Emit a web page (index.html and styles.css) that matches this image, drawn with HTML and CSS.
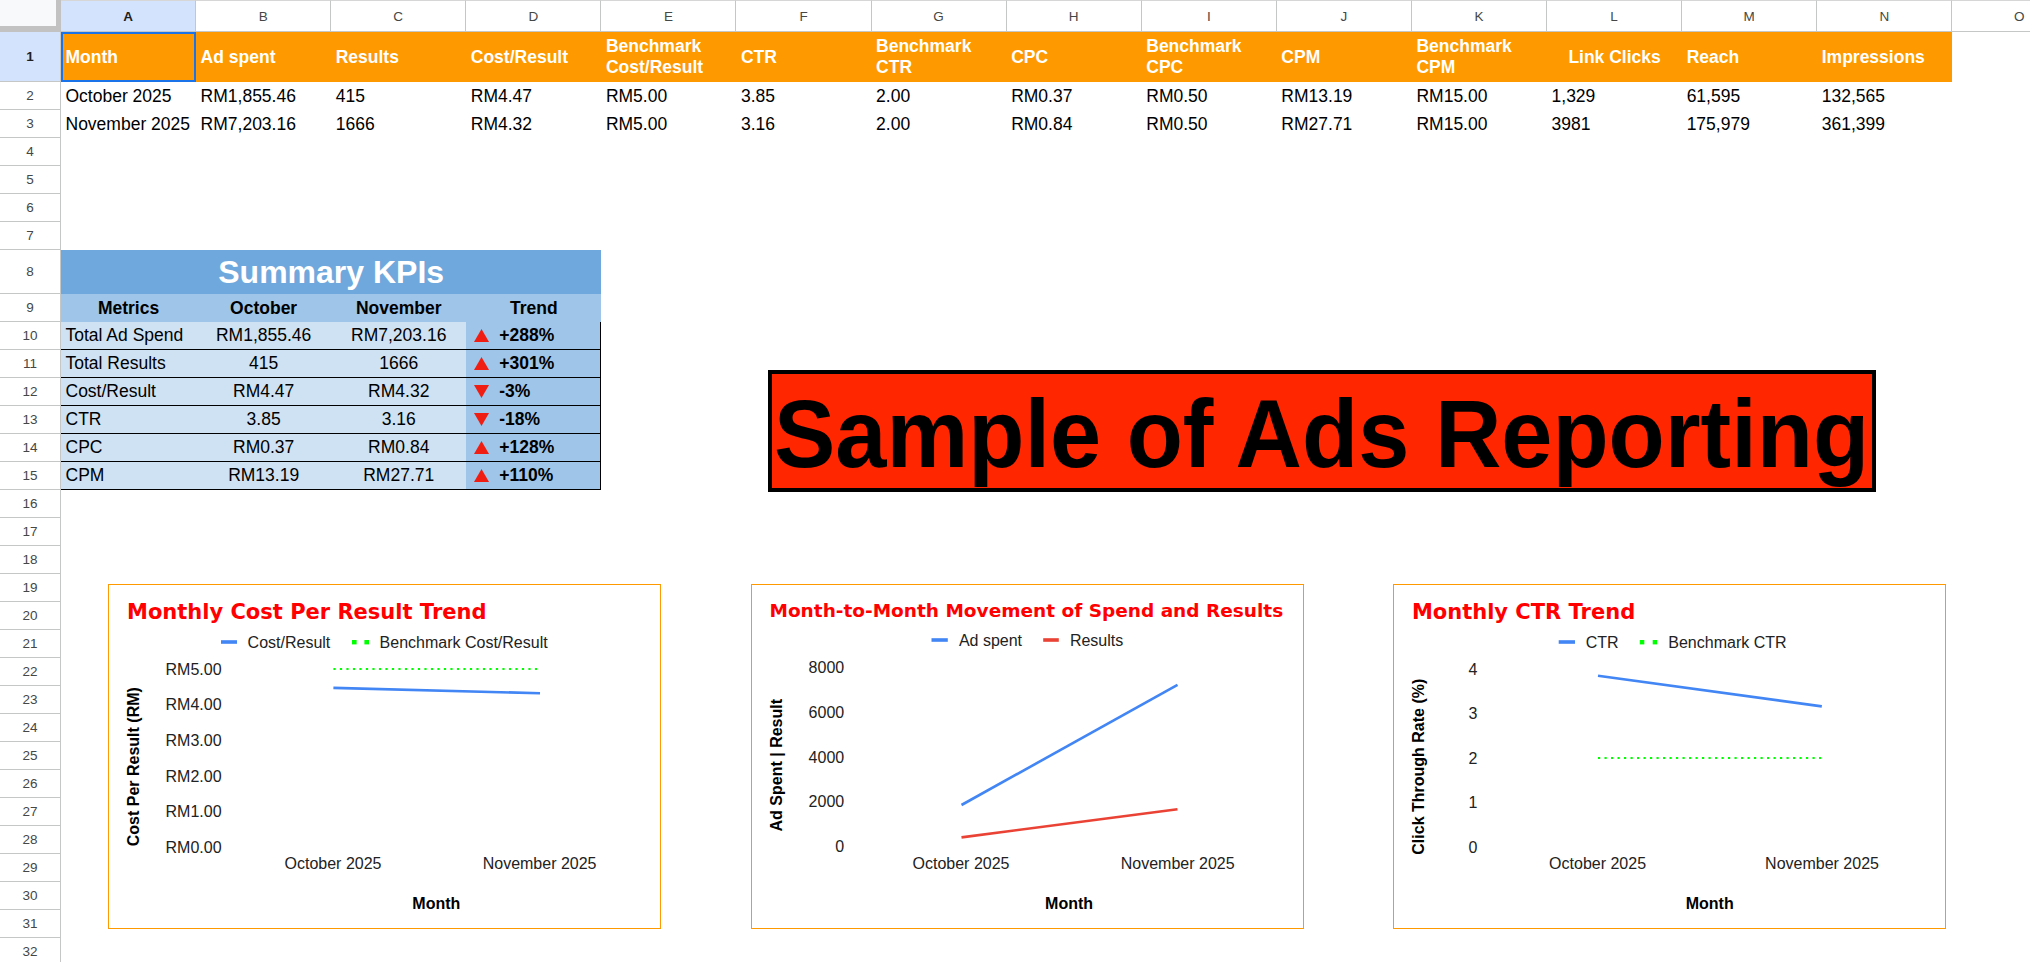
FILE: index.html
```html
<!DOCTYPE html>
<html>
<head>
<meta charset="utf-8">
<title>Sample of Ads Reporting</title>
<link rel="stylesheet" href="styles.css">
</head>
<body>
<div class="sheet">
  <div class="colhead">
    <div class="corner"></div>
    <div class="col sel">A</div>
    <div class="col">B</div>
    <div class="col">C</div>
    <div class="col">D</div>
    <div class="col">E</div>
    <div class="col">F</div>
    <div class="col">G</div>
    <div class="col">H</div>
    <div class="col">I</div>
    <div class="col">J</div>
    <div class="col">K</div>
    <div class="col">L</div>
    <div class="col">M</div>
    <div class="col">N</div>
    <div class="col">O</div>
  </div>
  <div class="main">
    <div class="rowhead">
      <div class="rn tall sel">1</div>
      <div class="rn">2</div>
      <div class="rn">3</div>
      <div class="rn">4</div>
      <div class="rn">5</div>
      <div class="rn">6</div>
      <div class="rn">7</div>
      <div class="rn mid">8</div>
      <div class="rn">9</div>
      <div class="rn">10</div>
      <div class="rn">11</div>
      <div class="rn">12</div>
      <div class="rn">13</div>
      <div class="rn">14</div>
      <div class="rn">15</div>
      <div class="rn">16</div>
      <div class="rn">17</div>
      <div class="rn">18</div>
      <div class="rn">19</div>
      <div class="rn">20</div>
      <div class="rn">21</div>
      <div class="rn">22</div>
      <div class="rn">23</div>
      <div class="rn">24</div>
      <div class="rn">25</div>
      <div class="rn">26</div>
      <div class="rn">27</div>
      <div class="rn">28</div>
      <div class="rn">29</div>
      <div class="rn">30</div>
      <div class="rn">31</div>
      <div class="rn">32</div>
    </div>
    <div class="cells">
      <div class="row hdr">
        <div class="c active">Month</div>
        <div class="c">Ad spent</div>
        <div class="c">Results</div>
        <div class="c">Cost/Result</div>
        <div class="c">Benchmark Cost/Result</div>
        <div class="c">CTR</div>
        <div class="c">Benchmark CTR</div>
        <div class="c">CPC</div>
        <div class="c">Benchmark CPC</div>
        <div class="c">CPM</div>
        <div class="c">Benchmark CPM</div>
        <div class="c center">Link Clicks</div>
        <div class="c">Reach</div>
        <div class="c">Impressions</div>
      </div>
      <div class="row">
        <div class="c">October 2025</div>
        <div class="c">RM1,855.46</div>
        <div class="c">415</div>
        <div class="c">RM4.47</div>
        <div class="c">RM5.00</div>
        <div class="c">3.85</div>
        <div class="c">2.00</div>
        <div class="c">RM0.37</div>
        <div class="c">RM0.50</div>
        <div class="c">RM13.19</div>
        <div class="c">RM15.00</div>
        <div class="c">1,329</div>
        <div class="c">61,595</div>
        <div class="c">132,565</div>
      </div>
      <div class="row">
        <div class="c">November 2025</div>
        <div class="c">RM7,203.16</div>
        <div class="c">1666</div>
        <div class="c">RM4.32</div>
        <div class="c">RM5.00</div>
        <div class="c">3.16</div>
        <div class="c">2.00</div>
        <div class="c">RM0.84</div>
        <div class="c">RM0.50</div>
        <div class="c">RM27.71</div>
        <div class="c">RM15.00</div>
        <div class="c">3981</div>
        <div class="c">175,979</div>
        <div class="c">361,399</div>
      </div>
      <div class="blank-rows"></div>

      <div class="kpi-section">
        <div class="kpi">
          <div class="kpi-title">Summary KPIs</div>
          <div class="kpi-head">
            <div class="k">Metrics</div>
            <div class="k">October</div>
            <div class="k">November</div>
            <div class="k">Trend</div>
          </div>
          <div class="kpi-row">
            <div class="k name">Total Ad Spend</div>
            <div class="k">RM1,855.46</div>
            <div class="k">RM7,203.16</div>
            <div class="k trend"><svg class="tri" viewBox="0 0 15 13"><polygon points="7.5,0 15,13 0,13"/></svg><span>+288%</span></div>
          </div>
          <div class="kpi-row">
            <div class="k name">Total Results</div>
            <div class="k">415</div>
            <div class="k">1666</div>
            <div class="k trend"><svg class="tri" viewBox="0 0 15 13"><polygon points="7.5,0 15,13 0,13"/></svg><span>+301%</span></div>
          </div>
          <div class="kpi-row">
            <div class="k name">Cost/Result</div>
            <div class="k">RM4.47</div>
            <div class="k">RM4.32</div>
            <div class="k trend"><svg class="tri" viewBox="0 0 15 13"><polygon points="0,0 15,0 7.5,13"/></svg><span>-3%</span></div>
          </div>
          <div class="kpi-row">
            <div class="k name">CTR</div>
            <div class="k">3.85</div>
            <div class="k">3.16</div>
            <div class="k trend"><svg class="tri" viewBox="0 0 15 13"><polygon points="0,0 15,0 7.5,13"/></svg><span>-18%</span></div>
          </div>
          <div class="kpi-row">
            <div class="k name">CPC</div>
            <div class="k">RM0.37</div>
            <div class="k">RM0.84</div>
            <div class="k trend"><svg class="tri" viewBox="0 0 15 13"><polygon points="7.5,0 15,13 0,13"/></svg><span>+128%</span></div>
          </div>
          <div class="kpi-row">
            <div class="k name">CPM</div>
            <div class="k">RM13.19</div>
            <div class="k">RM27.71</div>
            <div class="k trend"><svg class="tri" viewBox="0 0 15 13"><polygon points="7.5,0 15,13 0,13"/></svg><span>+110%</span></div>
          </div>
        </div>
        <div class="banner"><span class="banner-text">Sample of Ads Reporting</span></div>
      </div>

      <div class="charts">
        <div class="chart">
          <svg class="chart-svg" viewBox="1 1 551 343" width="551" height="343">
            <text class="ct" x="19" y="35">Monthly Cost Per Result Trend</text>
            <rect x="113" y="56.2" width="16" height="3.6" fill="#4285f4"/>
            <text class="lg" x="139.6" y="63.7">Cost/Result</text>
            <rect x="244" y="56" width="4.6" height="4.4" fill="#00ff00"/>
            <rect x="256.4" y="56" width="4.6" height="4.4" fill="#00ff00"/>
            <text class="lg" x="271.6" y="63.7">Benchmark Cost/Result</text>
            <text class="lg" x="113.6" y="90.7" text-anchor="end">RM5.00</text>
            <text class="lg" x="113.6" y="126.3" text-anchor="end">RM4.00</text>
            <text class="lg" x="113.6" y="161.9" text-anchor="end">RM3.00</text>
            <text class="lg" x="113.6" y="197.5" text-anchor="end">RM2.00</text>
            <text class="lg" x="113.6" y="233.1" text-anchor="end">RM1.00</text>
            <text class="lg" x="113.6" y="268.7" text-anchor="end">RM0.00</text>
            <line x1="225.4" y1="85" x2="432" y2="85" stroke="#00ff00" stroke-width="2.2" stroke-dasharray="2.2 4.3"/>
            <line x1="225.4" y1="103.9" x2="432" y2="109.2" stroke="#4285f4" stroke-width="2.6"/>
            <text class="lg" x="225" y="284.7" text-anchor="middle">October 2025</text>
            <text class="lg" x="431.6" y="284.7" text-anchor="middle">November 2025</text>
            <text class="ax" x="328.3" y="324.7" text-anchor="middle">Month</text>
            <text class="ax" transform="translate(24.8,182.7) rotate(-90)" text-anchor="middle" dy="5.7">Cost Per Result (RM)</text>
          </svg>
        </div>
        <div class="chart">
          <svg class="chart-svg" viewBox="1 1 551 343" width="551" height="343">
            <text class="ct ct-small" x="18.5" y="33.2">Month-to-Month Movement of Spend and Results</text>
            <rect x="180.5" y="54.2" width="16.3" height="3.6" fill="#4285f4"/>
            <text class="lg" x="207.9" y="61.7">Ad spent</text>
            <rect x="292.2" y="54.2" width="15.6" height="3.6" fill="#ea4335"/>
            <text class="lg" x="318.9" y="61.7">Results</text>
            <text class="lg" x="93.2" y="88.7" text-anchor="end">8000</text>
            <text class="lg" x="93.2" y="133.6" text-anchor="end">6000</text>
            <text class="lg" x="93.2" y="178.5" text-anchor="end">4000</text>
            <text class="lg" x="93.2" y="223.4" text-anchor="end">2000</text>
            <text class="lg" x="93.2" y="268.4" text-anchor="end">0</text>
            <line x1="210.5" y1="221" x2="426.5" y2="100.9" stroke="#4285f4" stroke-width="2.6"/>
            <line x1="210.5" y1="253.4" x2="426.5" y2="225.3" stroke="#ea4335" stroke-width="2.6"/>
            <text class="lg" x="210" y="284.7" text-anchor="middle">October 2025</text>
            <text class="lg" x="426.7" y="284.7" text-anchor="middle">November 2025</text>
            <text class="ax" x="318.1" y="324.7" text-anchor="middle">Month</text>
            <text class="ax" transform="translate(25.5,181.2) rotate(-90)" text-anchor="middle" dy="5.7">Ad Spent | Result</text>
          </svg>
        </div>
        <div class="chart">
          <svg class="chart-svg" viewBox="1 1 551 343" width="551" height="343">
            <text class="ct" x="18.9" y="35">Monthly CTR Trend</text>
            <rect x="165.7" y="56.2" width="16.3" height="3.6" fill="#4285f4"/>
            <text class="lg" x="192.7" y="63.7">CTR</text>
            <rect x="246.8" y="56" width="4.5" height="4.4" fill="#00ff00"/>
            <rect x="259.7" y="56" width="4.5" height="4.4" fill="#00ff00"/>
            <text class="lg" x="275.3" y="63.7">Benchmark CTR</text>
            <text class="lg" x="79.9" y="90.7" text-anchor="middle">4</text>
            <text class="lg" x="79.9" y="135.2" text-anchor="middle">3</text>
            <text class="lg" x="79.9" y="179.7" text-anchor="middle">2</text>
            <text class="lg" x="79.9" y="224.2" text-anchor="middle">1</text>
            <text class="lg" x="79.9" y="268.7" text-anchor="middle">0</text>
            <line x1="205" y1="174" x2="428.8" y2="174" stroke="#00ff00" stroke-width="2.2" stroke-dasharray="2.2 4.3"/>
            <line x1="205" y1="91.7" x2="428.8" y2="122.4" stroke="#4285f4" stroke-width="2.6"/>
            <text class="lg" x="204.6" y="284.7" text-anchor="middle">October 2025</text>
            <text class="lg" x="429" y="284.7" text-anchor="middle">November 2025</text>
            <text class="ax" x="316.7" y="324.7" text-anchor="middle">Month</text>
            <text class="ax" transform="translate(25.5,182.7) rotate(-90)" text-anchor="middle" dy="5.7">Click Through Rate (%)</text>
          </svg>
        </div>
      </div>
    </div>
  </div>
</div>
</body>
</html>
```
FILE: styles.css
```css
* { box-sizing: border-box; }
html, body { margin: 0; padding: 0; }
body {
  width: 2030px;
  height: 962px;
  overflow: hidden;
  background: #ffffff;
  font-family: "Liberation Sans", Arial, sans-serif;
  color: #000;
}

.sheet { width: 2030px; }

/* column header */
.colhead {
  display: flex;
  height: 32px;
}
.corner {
  flex: none;
  width: 61px;
  height: 32px;
  background: #f8f9fa;
  border-right: 5px solid #c2c2c2;
  border-bottom: 6px solid #c2c2c2;
}
.col {
  flex: none;
  width: 135.1px;
  height: 32px;
  border-top: 1px solid #d6d6d6;
  border-right: 1px solid #c4c7c5;
  border-bottom: 1px solid #c4c7c5;
  display: flex;
  align-items: center;
  justify-content: center;
  font-size: 13.5px;
  color: #444746;
}
.col.sel {
  background: #d3e3fd;
  font-weight: bold;
  color: #1f1f1f;
}

/* body */
.main { display: flex; }
.rowhead {
  flex: none;
  width: 61px;
  border-right: 1px solid #c4c7c5;
}
.rn {
  height: 28px;
  border-bottom: 1px solid #c4c7c5;
  display: flex;
  align-items: center;
  justify-content: center;
  font-size: 13.5px;
  color: #444746;
}
.rn.tall { height: 50px; }
.rn.mid { height: 44px; }
.rn.sel {
  background: #d3e3fd;
  font-weight: bold;
  color: #1f1f1f;
}

.cells {
  flex: none;
  width: 1969px;
  display: flex;
  flex-direction: column;
}

.row {
  display: flex;
  height: 28px;
  align-items: center;
}
.c {
  flex: none;
  width: 135.1px;
  padding: 0 4.5px;
  font-size: 17.5px;
  white-space: nowrap;
}
.hdr { height: 50px; align-items: stretch; }
.hdr .c {
  background: #ff9900;
  color: #ffffff;
  font-weight: bold;
  white-space: normal;
  line-height: 21px;
  display: flex;
  align-items: center;
}
.hdr .c.center { justify-content: center; }
.hdr .c.active { box-shadow: inset 0 0 0 2px #1a73e8; }

.blank-rows { height: 112px; }

/* KPI table */
.kpi-section {
  display: flex;
  height: 240px;
}
.kpi {
  flex: none;
  width: 540.4px;
  font-size: 17.5px;
}
.kpi-title {
  height: 44px;
  background: #6fa8dc;
  color: #ffffff;
  font-weight: bold;
  font-size: 32px;
  display: flex;
  align-items: center;
  justify-content: center;
}
.kpi-head, .kpi-row {
  display: flex;
  height: 28px;
}
.kpi-head {
  background: #9fc5e8;
  font-weight: bold;
}
.kpi-row { border-bottom: 1px solid #000; }
.k {
  flex: none;
  width: 135.1px;
  display: flex;
  align-items: center;
  justify-content: center;
  white-space: nowrap;
}
.kpi-row .k { background: #cfe2f3; }
.kpi-row .k.name { justify-content: flex-start; padding-left: 4.5px; }
.kpi-row .k.trend {
  background: #9fc5e8;
  justify-content: flex-start;
  padding-left: 8px;
  gap: 10px;
  font-weight: bold;
  border-right: 1px solid #000;
}
.tri {
  width: 15px;
  height: 13px;
  fill: #f01d12;
  flex: none;
}

/* banner */
.banner {
  flex: none;
  margin-left: 166.6px;
  margin-top: 120px;
  width: 1108px;
  height: 122px;
  border: 4px solid #000;
  background: #ff2600;
  display: flex;
  align-items: center;
  justify-content: center;
  padding-top: 4px;
  overflow: hidden;
}
.banner-text {
  display: inline-block;
  flex: none;
  font-weight: bold;
  font-size: 97px;
  line-height: 1;
  white-space: nowrap;
  color: #000;
  transform: scaleX(0.948);
}

/* charts */
.charts {
  display: flex;
  gap: 89.3px;
  margin-top: 94.3px;
  padding-left: 47.4px;
}
.chart {
  flex: none;
  width: 553px;
  height: 345px;
  border: 1px solid #ff9900;
  background: #ffffff;
}
.chart-svg { display: block; }
.ct {
  font-family: "DejaVu Sans", Verdana, sans-serif;
  font-weight: bold;
  font-size: 21px;
  fill: #ff0000;
}
.ct-small { font-size: 18.5px; }
.lg {
  font-family: "Liberation Sans", Arial, sans-serif;
  font-size: 16px;
  fill: #222222;
}
.ax {
  font-family: "Liberation Sans", Arial, sans-serif;
  font-weight: bold;
  font-size: 16px;
  fill: #000000;
}
```
